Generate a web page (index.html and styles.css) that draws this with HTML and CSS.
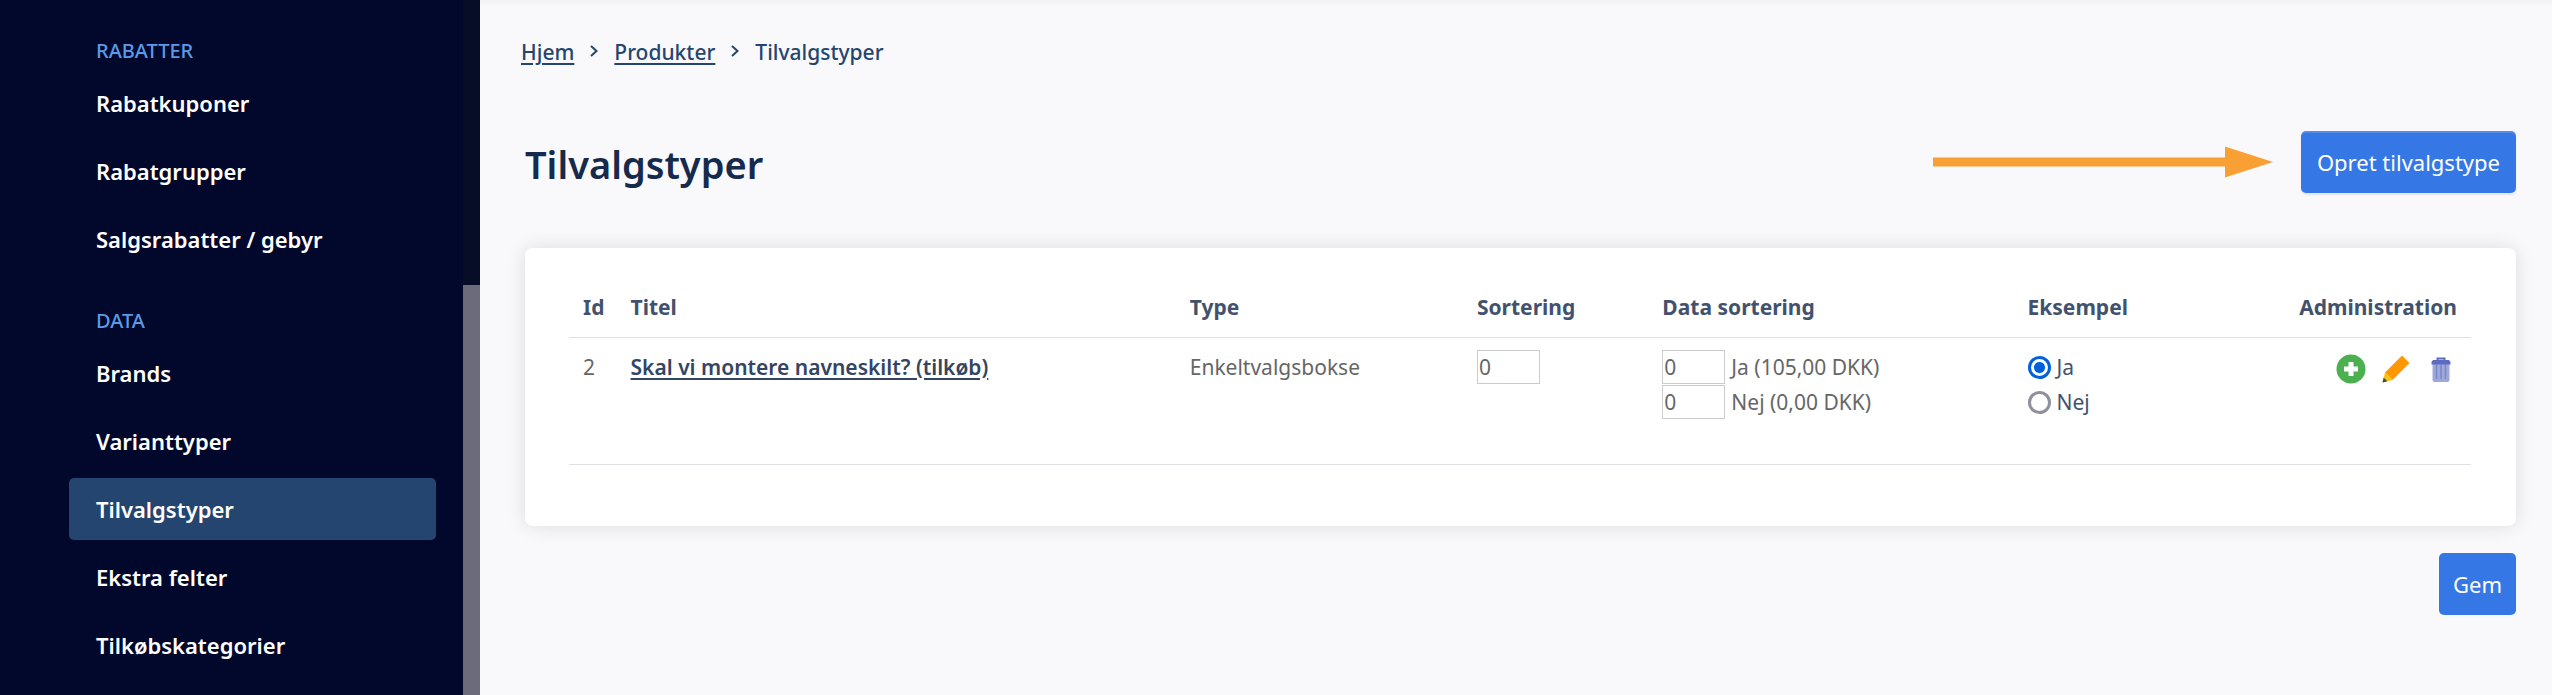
FILE: index.html
```html
<!DOCTYPE html>
<html lang="da">
<head>
<meta charset="utf-8">
<title>Tilvalgstyper</title>
<link rel="stylesheet" href="styles.css">
</head>
<body>
<div class="app">
  <aside class="sidebar">
    <nav class="menu">
      <section class="menu-group">
        <h2 class="menu-heading">RABATTER</h2>
        <ul class="menu-list">
          <li><a class="menu-link" href="#">Rabatkuponer</a></li>
          <li><a class="menu-link" href="#">Rabatgrupper</a></li>
          <li><a class="menu-link" href="#">Salgsrabatter / gebyr</a></li>
        </ul>
      </section>
      <section class="menu-group">
        <h2 class="menu-heading">DATA</h2>
        <ul class="menu-list">
          <li><a class="menu-link" href="#">Brands</a></li>
          <li><a class="menu-link" href="#">Varianttyper</a></li>
          <li><a class="menu-link menu-link-active" href="#" aria-current="page">Tilvalgstyper</a></li>
          <li><a class="menu-link" href="#">Ekstra felter</a></li>
          <li><a class="menu-link" href="#">Tilkøbskategorier</a></li>
        </ul>
      </section>
    </nav>
    <div class="scrollbar"><div class="scrollbar-thumb"></div></div>
  </aside>

  <main class="main">
    <nav class="breadcrumb">
      <a class="breadcrumb-link" href="#">Hjem</a>
      <svg class="chevron" viewBox="0 0 8 14" aria-hidden="true"><path d="M1 1 6.500 6 1 11"/></svg>
      <a class="breadcrumb-link" href="#">Produkter</a>
      <svg class="chevron" viewBox="0 0 8 14" aria-hidden="true"><path d="M1 1 6.500 6 1 11"/></svg>
      <span>Tilvalgstyper</span>
    </nav>

    <header class="page-header">
      <h1 class="page-title">Tilvalgstyper</h1>
      <svg class="arrow" viewBox="0 0 340 40" aria-hidden="true"><path d="M0 15.500H292V4.500L340 20 292 35.500V24.500H0Z"/></svg>
      <button class="button button-raised" type="button">Opret tilvalgstype</button>
    </header>

    <form class="form">
      <div class="card">
        <table class="table">
          <colgroup>
            <col class="col-id"><col class="col-title"><col class="col-type"><col class="col-sort"><col class="col-data"><col class="col-example"><col class="col-admin">
          </colgroup>
          <thead>
            <tr><th>Id</th><th>Titel</th><th>Type</th><th>Sortering</th><th>Data sortering</th><th>Eksempel</th><th class="admin-head">Administration</th></tr>
          </thead>
          <tbody>
            <tr>
              <td>2</td>
              <td><a class="title-link" href="#">Skal vi montere navneskilt? (tilkøb)</a></td>
              <td>Enkeltvalgsbokse</td>
              <td class="cell-fields"><input class="number" type="text" value="0" aria-label="Sortering"></td>
              <td class="cell-fields">
                <label class="field"><input class="number" type="text" value="0"><span>Ja (105,00 DKK)</span></label>
                <label class="field"><input class="number" type="text" value="0"><span>Nej (0,00 DKK)</span></label>
              </td>
              <td class="cell-fields">
                <label class="field option"><input class="radio" type="radio" name="eksempel" checked><span>Ja</span></label>
                <label class="field option"><input class="radio" type="radio" name="eksempel"><span>Nej</span></label>
              </td>
              <td class="cell-fields">
                <div class="actions">
                  <button class="icon-button" type="button" aria-label="Tilføj">
                    <svg class="icon" viewBox="0 0 32 32"><circle cx="16" cy="16" r="14.500" fill="#4caf50"/><path d="M13.500 9h5v4.500H23v5h-4.500V23h-5v-4.500H9v-5h4.500z" fill="#fff"/></svg>
                  </button>
                  <button class="icon-button" type="button" aria-label="Rediger">
                    <svg class="icon" viewBox="0 0 32 32"><path d="M22 2.500 29.500 10 12.500 27 5 19.500z" fill="#ff9800"/><path d="M5 19.500 12.500 27 2.500 29.500z" fill="#ffc107"/><path d="M3.700 24.700 7.400 28.300 2.500 29.500z" fill="#37474f"/></svg>
                  </button>
                  <button class="icon-button" type="button" aria-label="Slet">
                    <svg class="icon" viewBox="0 0 32 32"><path d="M7.500 10h17v17a2 2 0 0 1-2 2h-13a2 2 0 0 1-2-2z" fill="#9fa8da"/><path d="M11.500 11.500V26M16 11.500V26M20.500 11.500V26" stroke="#7986cb" stroke-width="1.500"/><path d="M12.500 8V5.500h7V8" fill="none" stroke="#5c6bc0" stroke-width="2"/><path d="M8 7h16l1.500 2v2.500h-19V9z" fill="#5c6bc0"/></svg>
                  </button>
                </div>
              </td>
            </tr>
          </tbody>
        </table>
      </div>
      <button class="button" type="button">Gem</button>
    </form>
  </main>
</div>
</body>
</html>
```

FILE: styles.css
```css
* {
  box-sizing: border-box;
}

body {
  margin: 0;
  font-family: "Noto Sans", "Open Sans", sans-serif;
  font-size: 21px;
  background: #f9f9fb;
  color: #666;
}

.app {
  display: flex;
  min-height: 100vh;
}

/* Sidebar */
.sidebar {
  display: flex;
  flex: 0 0 480px;
  background: #02082c;
}

.menu {
  display: flex;
  flex: 1;
  flex-direction: column;
  gap: 36px;
  padding: 36px 27px 0 69px;
}

.menu-heading {
  margin: 0 0 6px;
  padding-left: 27px;
  font-size: 20px;
  font-weight: 500;
  line-height: 30px;
  color: #5b9ae6;
}

.menu-list {
  display: flex;
  flex-direction: column;
  gap: 6px;
  margin: 0;
  padding: 0;
  list-style: none;
}

.menu-link {
  display: block;
  padding: 0 27px;
  border-radius: 5px;
  font-size: 22px;
  font-weight: 600;
  line-height: 62px;
  color: #fff;
  text-decoration: none;
}

.menu-link-active {
  background: #24456f;
}

.scrollbar {
  display: flex;
  flex: 0 0 17px;
  align-items: flex-end;
  background: #080d27;
}

.scrollbar-thumb {
  width: 100%;
  height: 59%;
  background: #6b6b7b;
}

/* Main area */
.main {
  flex: 1;
  min-width: 0;
  padding: 36px 36px 0 45px;
  box-shadow: inset 0 12px 12px -12px rgba(0, 0, 0, 0.06);
}

.breadcrumb {
  display: flex;
  align-items: center;
  gap: 16px;
  margin-left: -4px;
  font-weight: 500;
  line-height: 32px;
  color: #24456f;
}

.breadcrumb-link {
  color: inherit;
  text-underline-offset: 3px;
}

.chevron {
  width: 8px;
  height: 14px;
  fill: none;
  stroke: #24456f;
  stroke-width: 2;
}

.page-header {
  display: flex;
  align-items: center;
  gap: 28px;
  margin-top: 63px;
}

.page-title {
  margin: 0 auto 0 0;
  padding-top: 4px;
  font-size: 38px;
  font-weight: 600;
  line-height: 58px;
  color: #162a4d;
}

.arrow {
  width: 340px;
  height: 40px;
  fill: #f9a035;
}

.button {
  padding: 0 14px;
  border: 0;
  border-radius: 5px;
  font-family: inherit;
  font-size: 22px;
  line-height: 62px;
  color: #fff;
  background: #3578e5;
}

.button-raised {
  padding: 0 16px;
  box-shadow: inset 0 2px 0 rgba(255, 255, 255, 0.15), 0 2px 2px rgba(0, 0, 0, 0.08);
}

.form {
  display: flex;
  flex-direction: column;
  align-items: flex-end;
  gap: 27px;
  margin-top: 55px;
}

.card {
  width: 100%;
  padding: 33px 45px 61px 44px;
  border-radius: 8px;
  background: #fff;
  box-shadow: 0 0 20px rgba(0, 0, 0, 0.12);
}

/* Table */
.table {
  width: 100%;
  table-layout: fixed;
  border-collapse: collapse;
}

.col-id { width: 2.5%; }
.col-title { width: 29.4%; }
.col-type { width: 15.1%; }
.col-sort { width: 9.75%; }
.col-data { width: 19.2%; }
.col-example { width: 13.05%; }
.col-admin { width: 11%; }

.table th,
.table td {
  padding: 0 14px;
  border-bottom: 1px solid #dee0e4;
  text-align: left;
  vertical-align: top;
  white-space: nowrap;
}

.table th {
  height: 56px;
  padding-top: 10px;
  font-weight: 700;
  line-height: 32px;
  color: #42526e;
}

.table .admin-head {
  text-align: right;
}

.table td {
  height: 127px;
  padding-top: 13px;
  line-height: 32px;
}

.table .cell-fields {
  padding-top: 12px;
}

.title-link {
  font-weight: 600;
  color: #344563;
  text-underline-offset: 3px;
}

.field {
  display: flex;
  align-items: center;
  gap: 6px;
  height: 35px;
}

.option {
  color: #42526e;
}

.number {
  display: block;
  width: 63px;
  height: 34px;
  padding: 0 1px;
  border: 1px solid #ccc;
  font-family: inherit;
  font-size: 21px;
  color: #666;
  background: #fff;
}

.radio {
  appearance: none;
  flex: none;
  width: 23px;
  height: 23px;
  margin: 0;
  border: 3px solid #8f8f9d;
  border-radius: 50%;
  background: #fff;
}

.radio:checked {
  border-color: #0060df;
  background: radial-gradient(circle, #0060df 5px, #fff 6px);
}

.actions {
  display: flex;
  justify-content: flex-end;
  gap: 13px;
  padding-top: 3px;
}

.icon-button {
  padding: 0;
  border: 0;
  background: none;
}

.icon {
  display: block;
  width: 32px;
  height: 32px;
}
```
